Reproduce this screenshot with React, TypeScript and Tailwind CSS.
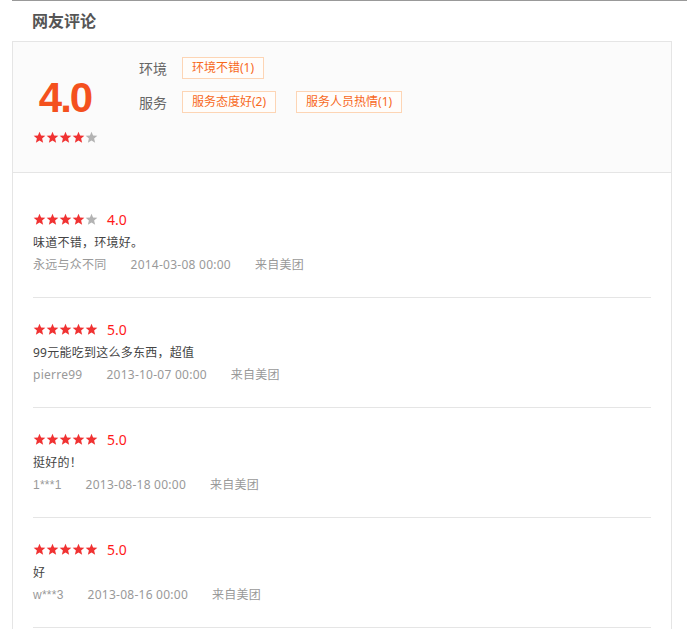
import React from "react";

const FONT = { fontFamily: '"Noto Sans", "Liberation Sans", Arial, "Noto Sans CJK SC", sans-serif' };
const NUM = { fontFamily: '"Liberation Sans", Arial, "Noto Sans CJK SC", sans-serif' };

function Star({ on }: { on: boolean }) {
  return (
    <svg viewBox="0 0 24 24" className="w-[13px] h-[13px] block" aria-hidden>
      <polygon
        points="12,1.2 14.9,8.4 22.8,8.9 16.8,13.9 18.7,21.8 12,17.5 5.3,21.8 7.2,13.9 1.2,8.9 9.1,8.4"
        fill={on ? "#f03232" : "#b3b3b3"}
      />
    </svg>
  );
}

function Stars({ n }: { n: number }) {
  return (
    <div className="flex items-center">
      {[0, 1, 2, 3, 4].map((i) => (
        <Star key={i} on={i < n} />
      ))}
    </div>
  );
}

const reviews = [
  { stars: 4, score: "4.0", text: "味道不错，环境好。", user: "永远与众不同", date: "2014-03-08 00:00", masked: false },
  { stars: 5, score: "5.0", text: "99元能吃到这么多东西，超值", user: "pierre99", date: "2013-10-07 00:00", masked: false },
  { stars: 5, score: "5.0", text: "挺好的！", user: "1***1", date: "2013-08-18 00:00", masked: true },
  { stars: 5, score: "5.0", text: "好", user: "w***3", date: "2013-08-16 00:00", masked: true },
];

function Tag({ children }: { children: React.ReactNode }) {
  return (
    <span className="h-[22px] px-[9px] border border-[#fdd5b5] bg-[#fffdfb] text-[#f7691d] text-[12px] leading-[20px] flex items-center">
      {children}
    </span>
  );
}

export default function App() {
  return (
    <div className="h-screen overflow-hidden bg-white pl-[12px]" style={FONT}>
      <div className="border-t border-[#999999]">
        <div className="h-[40px] flex items-center pl-[20px] text-[16px] font-bold text-[#555555]">网友评论</div>
        <div className="w-[660px] border border-[#e5e5e5]">
          <div className="h-[131px] bg-[#fbfbfb] border-b border-[#e5e5e5] flex px-[20px]">
            <div className="w-[64px] flex flex-col items-center pt-[35px]">
              <div className="text-[42px] leading-[42px] font-bold tracking-[-2px] text-[#f4511e]" style={NUM}>
                4.0
              </div>
              <div className="mt-[12px]">
                <Stars n={4} />
              </div>
            </div>
            <div className="ml-[42px] pt-[15px] flex flex-col gap-[12px]">
              <div className="flex items-center h-[22px]">
                <span className="w-[43px] text-[14px] text-[#666666]">环境</span>
                <Tag>环境不错(1)</Tag>
              </div>
              <div className="flex items-center h-[22px] gap-[20px]">
                <div className="flex items-center">
                  <span className="w-[43px] text-[14px] text-[#666666]">服务</span>
                  <Tag>服务态度好(2)</Tag>
                </div>
                <Tag>服务人员热情(1)</Tag>
              </div>
            </div>
          </div>
          <div className="px-[20px] pt-[15px] pb-[40px]">
            {reviews.map((r, i) => (
              <div key={i} className="pt-[21px] pb-[22px] border-b border-[#e5e5e5]">
                <div className="h-[20px] flex items-center gap-[9px]">
                  <Stars n={r.stars} />
                  <span className="text-[14px] text-[#ff1a1a]">{r.score}</span>
                </div>
                <div className="mt-[4px] h-[20px] leading-[20px] text-[12px] tracking-[0.25px] text-[#444444]">{r.text}</div>
                <div className="mt-[2px] h-[20px] leading-[20px] text-[12px] tracking-[0.25px] text-[#999999] flex gap-[24px]">
                  <span style={r.masked ? NUM : undefined}>{r.user}</span>
                  <span>{r.date}</span>
                  <span>来自美团</span>
                </div>
              </div>
            ))}
          </div>
        </div>
      </div>
    </div>
  );
}
